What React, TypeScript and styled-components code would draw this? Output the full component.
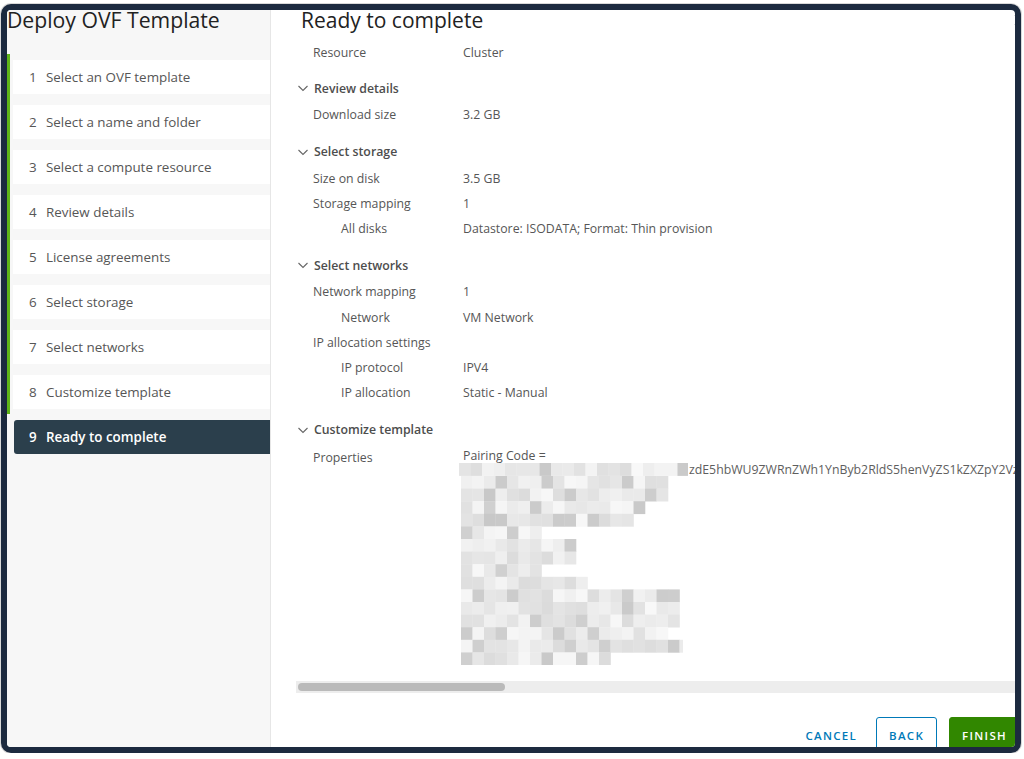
import React from 'react';
import styled, { createGlobalStyle } from 'styled-components';

const GlobalStyle = createGlobalStyle`
  html, body {
    margin: 0;
    padding: 0;
    background: #fff;
    font-family: "Open Sans", Lato, sans-serif;
  }
  * { box-sizing: border-box; }
`;

const Frame = styled.div`
  margin: 4px 0 0 1px;
  width: 1020px;
  height: 749px;
  border: 6px solid #1c2a3f;
  border-radius: 10px;
  box-shadow: 0 0 0 1px rgba(0, 0, 0, 0.15);
  overflow: hidden;
  display: flex;
  background: #fff;
`;

const Sidebar = styled.div`
  width: 264px;
  flex-shrink: 0;
  background: #f7f7f7;
  border-right: 1px solid #e6e6e6;
  display: flex;
  flex-direction: column;
`;

const WizardTitle = styled.div`
  font-size: 21.2px;
  line-height: 20px;
  color: #222;
  white-space: nowrap;
`;

const StepList = styled.div`
  margin-top: 24px;
  display: flex;
  flex-direction: column;
`;

const StepSlot = styled.div<{ done: boolean }>`
  height: 45px;
  padding: 6px 0 5px 3px;
  border-left: 3px solid ${p => (p.done ? '#5fb517' : 'transparent')};
`;

const StepBox = styled.div<{ active: boolean }>`
  height: 34px;
  display: flex;
  align-items: center;
  padding-left: ${p => (p.active ? '15px' : '16px')};
  margin-left: ${p => (p.active ? '1px' : '0')};
  background: ${p => (p.active ? '#2b3f4c' : '#fff')};
  border-radius: ${p => (p.active ? '3px 0 0 3px' : '0')};
  color: ${p => (p.active ? '#fff' : '#565656')};
  font-weight: ${p => (p.active ? 600 : 400)};
  font-size: 13.4px;
  white-space: nowrap;
`;

const StepNum = styled.span`
  width: 17px;
`;

const Main = styled.div`
  flex: 1;
  min-width: 0;
  display: flex;
  flex-direction: column;
`;

const Header = styled.div`
  height: 20px;
  flex-shrink: 0;
  display: flex;
  justify-content: space-between;
  align-items: center;
  padding-left: 30px;
`;

const PageTitle = styled.div`
  font-size: 21px;
  line-height: 20px;
  font-weight: 400;
  color: #222;
`;

const Close = styled.div`
  margin-right: -12px;
  color: #777;
  display: flex;
`;

const Body = styled.div`
  flex: 1;
  min-height: 0;
  overflow: hidden;
  padding: 9.5px 0 0 26px;
  color: #565656;
  font-size: 12.3px;
`;

const Row = styled.div<{ indent?: boolean }>`
  display: flex;
  min-height: 25.25px;
  align-items: center;
  padding-left: ${p => (p.indent ? '44px' : '16px')};
`;

const Label = styled.div<{ indent?: boolean }>`
  width: ${p => (p.indent ? '122px' : '150px')};
  flex-shrink: 0;
`;

const Value = styled.div`
  white-space: nowrap;
`;

const SectionHead = styled.div<{ first?: boolean }>`
  height: 28px;
  margin-top: ${p => (p.first ? '9.5px' : '10px')};
  display: flex;
  align-items: center;
  gap: 5px;
  font-weight: 600;
  color: #4d4d4d;
`;

const PropRow = styled.div`
  display: flex;
  padding-left: 16px;
  padding-top: 5.5px;
`;

const PropValue = styled.div`
  display: flex;
  flex-direction: column;
  line-height: 13px;
`;

const CodeLine = styled.div`
  display: flex;
  align-items: center;
  margin-left: -2px;
  margin-top: 1px;
  white-space: nowrap;
`;

const Code = styled.span`
  margin-left: 1px;
  color: #5e5e5e;
`;

const MosaicBlock = styled.svg`
  display: block;
  margin-left: -2px;
`;

const Scrollbar = styled.div`
  height: 12px;
  flex-shrink: 0;
  margin-left: 25px;
  background: #ededed;
  display: flex;
  align-items: center;
  padding-left: 2px;
`;

const Thumb = styled.div`
  width: 207px;
  height: 8px;
  border-radius: 4px;
  background: #bababa;
`;

const Footer = styled.div`
  height: 54px;
  flex-shrink: 0;
  display: flex;
  justify-content: flex-end;
  align-items: flex-start;
  padding-top: 24px;
  margin-right: -5px;
  gap: 6px;
`;

const Btn = styled.button<{ kind: 'flat' | 'outline' | 'solid' }>`
  height: 36px;
  padding: 0 12px;
  font-family: "Open Sans", Lato, sans-serif;
  font-size: 11.5px;
  font-weight: 600;
  letter-spacing: 1.3px;
  border-radius: 3px;
  border: 1px solid ${p => (p.kind === 'outline' ? '#0079b8' : p.kind === 'solid' ? '#318700' : 'transparent')};
  background: ${p => (p.kind === 'solid' ? '#318700' : 'transparent')};
  color: ${p => (p.kind === 'solid' ? '#fff' : '#0079b8')};
  margin-left: ${p => (p.kind === 'solid' ? '6px' : '0')};
  flex-shrink: 0;
`;

const steps = [
  'Select an OVF template',
  'Select a name and folder',
  'Select a compute resource',
  'Review details',
  'License agreements',
  'Select storage',
  'Select networks',
  'Customize template',
  'Ready to complete',
];

const Chevron = () => (
  <svg width="12" height="12" viewBox="0 0 12 12">
    <path d="M1.5 4 L6 8.5 L10.5 4" fill="none" stroke="#666" strokeWidth="1.1" />
  </svg>
);

// pseudo random gray for the redacted pixel blocks
const rnd = (i: number) => {
  const x = Math.sin(i * 12.9898 + 78.233) * 43758.5453;
  return x - Math.floor(x);
};

const shade = (i: number) => {
  const r = rnd(i);
  const v = r < 0.2 ? 200 + Math.round(r * 40) : 212 + Math.round(r * 36);
  return `rgb(${v},${v},${v})`;
};

const CW = 11.5;
const CH = 12.6;

const Mosaic: React.FC<{ widths: number[]; seed: number }> = ({ widths, seed }) => {
  const maxW = Math.max(...widths);
  const cells: React.ReactNode[] = [];
  widths.forEach((w, r) => {
    const n = Math.ceil(w / CW);
    for (let c = 0; c < n; c++) {
      const k = seed + r * 31 + c;
      cells.push(
        <rect key={`${r}-${c}`} x={c * CW} y={r * CH} width={CW + 0.3} height={CH + 0.3} fill={shade(k)} />
      );
    }
  });
  return (
    <MosaicBlock width={maxW} height={widths.length * CH} viewBox={`0 0 ${maxW} ${widths.length * CH}`}>
      {cells}
    </MosaicBlock>
  );
};

const restWidths = [207, 207, 180, 167, 80, 108, 108, 70, 124, 211, 212, 212, 200, 222, 146];

export default function App() {
  return (
    <>
      <GlobalStyle />
      <Frame>
        <Sidebar>
          <WizardTitle>Deploy OVF Template</WizardTitle>
          <StepList>
            {steps.map((s, i) => (
              <StepSlot key={s} done={i < 8}>
                <StepBox active={i === 8}>
                  <StepNum>{i + 1}</StepNum>
                  {s}
                </StepBox>
              </StepSlot>
            ))}
          </StepList>
        </Sidebar>
        <Main>
          <Header>
            <PageTitle>Ready to complete</PageTitle>
            <Close>
              <svg width="14" height="14" viewBox="0 0 14 14">
                <path d="M2 2 L12 12 M12 2 L2 12" stroke="#777" strokeWidth="1.4" />
              </svg>
            </Close>
          </Header>
          <Body>
            <Row><Label>Resource</Label><Value>Cluster</Value></Row>

            <SectionHead first><Chevron />Review details</SectionHead>
            <Row><Label>Download size</Label><Value>3.2 GB</Value></Row>

            <SectionHead><Chevron />Select storage</SectionHead>
            <Row><Label>Size on disk</Label><Value>3.5 GB</Value></Row>
            <Row><Label>Storage mapping</Label><Value>1</Value></Row>
            <Row indent><Label indent>All disks</Label><Value>Datastore: ISODATA; Format: Thin provision</Value></Row>

            <SectionHead><Chevron />Select networks</SectionHead>
            <Row><Label>Network mapping</Label><Value>1</Value></Row>
            <Row indent><Label indent>Network</Label><Value>VM Network</Value></Row>
            <Row><Label>IP allocation settings</Label><Value></Value></Row>
            <Row indent><Label indent>IP protocol</Label><Value>IPV4</Value></Row>
            <Row indent><Label indent>IP allocation</Label><Value>Static - Manual</Value></Row>

            <SectionHead><Chevron />Customize template</SectionHead>
            <PropRow>
              <Label>Properties</Label>
              <PropValue>
                <span>Pairing Code =</span>
                <CodeLine>
                  <Mosaic widths={[229]} seed={3} />
                  <Code>zdE5hbWU9ZWRnZWh1YnByb2RldS5henVyZS1kZXZpY2VzLm5ldDtEZXZpY2VJZD1lZGdl</Code>
                </CodeLine>
                <Mosaic widths={restWidths} seed={40} />
              </PropValue>
            </PropRow>
          </Body>
          <Scrollbar><Thumb /></Scrollbar>
          <Footer>
            <Btn kind="flat">CANCEL</Btn>
            <Btn kind="outline">BACK</Btn>
            <Btn kind="solid">FINISH</Btn>
          </Footer>
        </Main>
      </Frame>
    </>
  );
}
